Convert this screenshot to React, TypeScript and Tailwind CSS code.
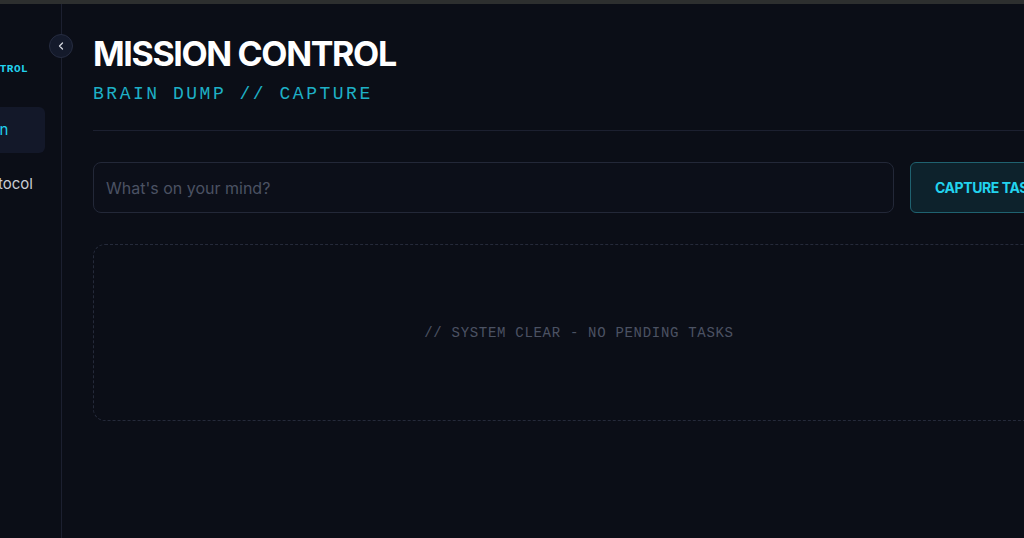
import React, { useState } from "react";
import { ChevronLeft, LayoutGrid, Brain, ShieldCheck } from "lucide-react";

type NavItem = {
  label: string;
  icon: React.ReactNode;
  active?: boolean;
};

const navItems: NavItem[] = [
  { label: "Execution", icon: <Brain size={18} />, active: true },
  { label: "Daily Protocol", icon: <ShieldCheck size={18} /> },
];

const Sidebar: React.FC = () => {
  return (
    <div className="relative shrink-0">
      <aside className="h-full w-[62px] overflow-hidden border-r border-[#1c2030] bg-[#0b0e17]">
        <div className="ml-[-119px] w-[180px] px-4 pt-[56px]">
          {/* brand */}
          <div className="flex items-center gap-1.5 font-['Liberation_Mono',monospace] text-[11px] font-bold tracking-wider text-[#22d3ee]">
            <LayoutGrid size={18} className="text-[#22d3ee]" />
            <span className="leading-[18px]">MISSION CONTROL</span>
          </div>

          <nav className="mt-[29px] flex flex-col gap-2">
            {navItems.map((item) => (
              <a
                key={item.label}
                href="#"
                className={`flex h-[46px] items-center gap-3 whitespace-nowrap rounded-md px-3 text-[15px] ${
                  item.active
                    ? "bg-[#131829] text-[#22d3ee]"
                    : "text-[#c9ccd4]"
                }`}
              >
                {item.icon}
                {item.label}
              </a>
            ))}
          </nav>
        </div>
      </aside>

      {/* collapse toggle */}
      <button
        type="button"
        className="absolute left-[49px] top-[30px] flex size-6 items-center justify-center rounded-full border border-[#262c40] bg-[#141a2b] text-[#d5d8e0]"
      >
        <ChevronLeft size={12} strokeWidth={2.5} />
      </button>
    </div>
  );
};

export default function App() {
  const [task, setTask] = useState("");

  return (
    <div className="flex h-[538px] w-[1024px] flex-col overflow-hidden bg-[#0b0e17] font-['Inter','Liberation_Sans',sans-serif]">
      <div className="h-1 shrink-0 bg-[#2d2f2f]" />

      <div className="flex min-h-0 flex-1">
        <Sidebar />

        <main className="min-w-0 flex-1 pl-[31px] pt-[30px]">
          <div className="w-[972px]">
            {/* Header */}
            <header className="border-b border-[#1c2030] pb-[22px]">
              <h1 className="text-[34px] font-bold leading-10 tracking-[-0.04em] text-white">
                MISSION CONTROL
              </h1>
              <p className="mt-1.5 font-['Liberation_Mono',monospace] text-lg leading-7 tracking-[0.14em] text-[#1eb0c6]">
                BRAIN DUMP // CAPTURE
              </p>
            </header>

            {/* Capture */}
            <div className="mt-[31px] flex gap-4">
              <input
                value={task}
                onChange={(e) => setTask(e.target.value)}
                placeholder="What's on your mind?"
                className="h-[51px] flex-1 rounded-lg border border-[#232838] bg-[#0c0f19] px-3 text-base text-white placeholder:text-[#4b5263] outline-none"
              />
              <button
                type="button"
                className="h-[51px] w-[155px] whitespace-nowrap rounded-md border border-[#1f6270] bg-[#0d222c] pl-6 text-left text-sm font-bold tracking-[-0.03em] text-[#22d3ee]"
              >
                CAPTURE TASK
              </button>
            </div>

            {/* Task list (empty state) */}
            <div className="mt-[31px] flex h-[177px] items-center justify-center rounded-xl border border-dashed border-[#252a3a]">
              <p className="font-['Liberation_Mono',monospace] text-sm tracking-wider text-[#4b5263]">
                // SYSTEM CLEAR - NO PENDING TASKS
              </p>
            </div>
          </div>
        </main>
      </div>
    </div>
  );
}
